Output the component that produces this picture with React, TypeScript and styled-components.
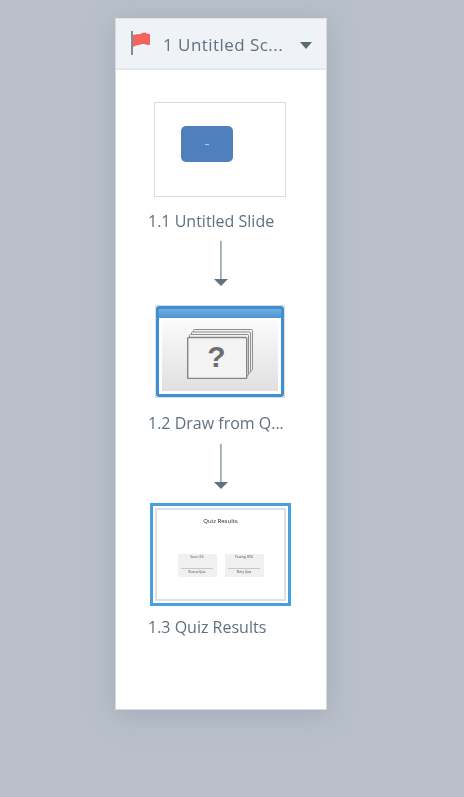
import React from "react";
import styled, { createGlobalStyle } from "styled-components";

const GlobalStyle = createGlobalStyle`
  html, body {
    margin: 0;
    height: 100%;
    background: #b9c0c9;
    overflow: hidden;
  }
`;

const Page = styled.div`
  width: 464px;
  height: 797px;
  padding: 18px 0 0 115px;
  box-sizing: border-box;
  font-family: "Open Sans", "Liberation Sans", sans-serif;
`;

const Panel = styled.div`
  width: 212px;
  height: 692px;
  box-sizing: border-box;
  background: #fff;
  border: 1px solid #d5dbe0;
  border-top-color: #dfe4e8;
  box-shadow: 0 4px 24px rgba(140, 150, 165, 0.5);
`;

const Header = styled.div`
  height: 51px;
  box-sizing: border-box;
  display: flex;
  align-items: center;
  padding: 0 14px;
  background: #eff3f7;
  border-bottom: 2px solid #e3e8ec;
`;

const HeaderTitle = styled.span`
  margin: 2px 0 0 11px;
  flex: 1;
  font-size: 17px;
  letter-spacing: 0.45px;
  color: #5f7180;
  white-space: nowrap;
  filter: blur(0.3px);
`;

const Caret = styled.span`
  width: 0;
  height: 0;
  margin-top: 3px;
  border-left: 6px solid transparent;
  border-right: 6px solid transparent;
  border-top: 7px solid #5c6a74;
`;

const List = styled.div`
  display: flex;
  flex-direction: column;
  align-items: flex-start;
  padding-top: 32px;
`;

const Node = styled.div<{ $indent: number }>`
  display: flex;
  flex-direction: column;
  align-items: flex-start;
  margin-left: ${(p) => p.$indent}px;
`;

const Thumb = styled.div<{ $w: number; $h: number }>`
  width: ${(p) => p.$w}px;
  height: ${(p) => p.$h}px;
  box-sizing: border-box;
  background: #fff;
`;

const PlainThumb = styled(Thumb)`
  border: 1px solid #dcdcdc;
  padding: 23px 0 0 26px;
`;

const BlueShape = styled.div`
  width: 52px;
  height: 36px;
  border-radius: 5px;
  background: #4f7fbc;
  display: flex;
  align-items: center;
  justify-content: center;
`;

const ShapeDash = styled.span`
  width: 4px;
  height: 1px;
  background: #b9cde6;
`;

const QuizThumb = styled(Thumb)`
  border: 1px solid #dcdcdc;
  display: flex;
`;

const QuizFrame = styled.div`
  flex: 1;
  display: flex;
  flex-direction: column;
  border: 3px solid #3f8fd4;
  border-radius: 3px;
  background: #fff;
`;

const QuizBar = styled.div`
  height: 9px;
  background: linear-gradient(#72addf, #4f94d4);
`;

const QuizBody = styled.div`
  flex: 1;
  display: flex;
  align-items: flex-start;
  justify-content: center;
  margin: 2px 3px 3px;
  padding-top: 9px;
  background: linear-gradient(#fbfbfb, #e0e0e0);
`;

const Label = styled.div<{ $left: number; $top: number }>`
  margin-left: ${(p) => p.$left}px;
  margin-top: ${(p) => p.$top}px;
  font-size: 16px;
  line-height: 20px;
  color: #5f7180;
  white-space: nowrap;
  filter: blur(0.3px);
`;

const ArrowWrap = styled.div<{ $top: number; $bottom: number }>`
  align-self: flex-start;
  margin: ${(p) => p.$top}px 0 ${(p) => p.$bottom}px 98px;
  width: 14px;
  height: 46px;
  line-height: 0;
`;

const ResultsThumb = styled(Thumb)`
  border: 3px solid #46a0e2;
  padding: 2px;
`;

const ResultsSlide = styled.div`
  height: 100%;
  box-sizing: border-box;
  border: 2px solid #e0e0e0;
  display: flex;
  flex-direction: column;
  align-items: center;
  filter: blur(0.5px);
`;

const ResultsTitle = styled.div`
  margin-top: 6px;
  font-size: 6px;
  line-height: 10px;
  color: #222;
  white-space: nowrap;
`;

const ResultsCards = styled.div`
  display: flex;
  gap: 8px;
  margin-top: 28px;
`;

const ResultCard = styled.div`
  width: 39px;
  height: 23px;
  box-sizing: border-box;
  background: #f0f0f0;
  display: flex;
  flex-direction: column;
  align-items: center;
  padding-top: 1px;
  font-size: 3px;
  line-height: 5px;
  color: #444;
`;

const CardRule = styled.div`
  width: 32px;
  height: 1px;
  margin-top: 8px;
  background: #c8c8c8;
`;

const CardFoot = styled.div`
  margin-top: 1px;
`;

const Flag = () => (
  <svg width="22" height="26" viewBox="0 0 22 26">
    <rect x="1" y="0" width="2" height="24" fill="#7f8c98" />
    <path
      d="M3 4L8 3Q10 4 12 2L15 1.500Q17 3 20 3L20 14Q16 14 14 13Q11 13 9 14Q6 14 3 16Z"
      fill="#f4645f"
    />
  </svg>
);

const Arrow = () => (
  <svg width="14" height="46" viewBox="0 0 14 46">
    <rect x="6.200" y="0" width="1.400" height="38" fill="#87969f" />
    <path d="M0 38h14L7 45z" fill="#5f727e" />
  </svg>
);

const QuestionCards = () => (
  <svg width="66" height="50" viewBox="0 0 66 50">
    <g fill="#f2f2f2" stroke="#8d8d8d" strokeWidth="1">
      <rect x="6.500" y="0.500" width="59" height="41" rx="1" />
      <rect x="4.500" y="3" width="59" height="41" rx="1" />
      <rect x="2.500" y="5.500" width="59" height="41" rx="1" />
    </g>
    <rect x="0.700" y="8.500" width="59" height="41" rx="1" fill="#f4f4f4" stroke="#868686" strokeWidth="1.400" />
    <text
      x="29.500"
      y="38"
      textAnchor="middle"
      fontFamily="'Liberation Sans', sans-serif"
      fontWeight="700"
      fontSize="30"
      fill="#6d6d6d"
    >
      ?
    </text>
  </svg>
);

export default function App() {
  return (
    <>
      <GlobalStyle />
      <Page>
        <Panel>
          <Header>
            <Flag />
            <HeaderTitle>1 Untitled Sc...</HeaderTitle>
            <Caret />
          </Header>
          <List>
            <Node $indent={38}>
              <PlainThumb $w={132} $h={95}>
                <BlueShape>
                  <ShapeDash />
                </BlueShape>
              </PlainThumb>
              <Label $left={-6} $top={14}>1.1 Untitled Slide</Label>
            </Node>
            <ArrowWrap $top={10} $bottom={18}>
              <Arrow />
            </ArrowWrap>
            <Node $indent={39}>
              <QuizThumb $w={130} $h={93}>
                <QuizFrame>
                  <QuizBar />
                  <QuizBody>
                    <QuestionCards />
                  </QuizBody>
                </QuizFrame>
              </QuizThumb>
              <Label $left={-7} $top={15}>1.2 Draw from Q...</Label>
            </Node>
            <ArrowWrap $top={11} $bottom={13}>
              <Arrow />
            </ArrowWrap>
            <Node $indent={34}>
              <ResultsThumb $w={141} $h={103}>
                <ResultsSlide>
                  <ResultsTitle>Quiz Results</ResultsTitle>
                  <ResultsCards>
                    <ResultCard>
                      Score: 0%
                      <CardRule />
                      <CardFoot>Review Quiz</CardFoot>
                    </ResultCard>
                    <ResultCard>
                      Passing: 80%
                      <CardRule />
                      <CardFoot>Retry Quiz</CardFoot>
                    </ResultCard>
                  </ResultsCards>
                </ResultsSlide>
              </ResultsThumb>
              <Label $left={-2} $top={11}>1.3 Quiz Results</Label>
            </Node>
          </List>
        </Panel>
      </Page>
    </>
  );
}
